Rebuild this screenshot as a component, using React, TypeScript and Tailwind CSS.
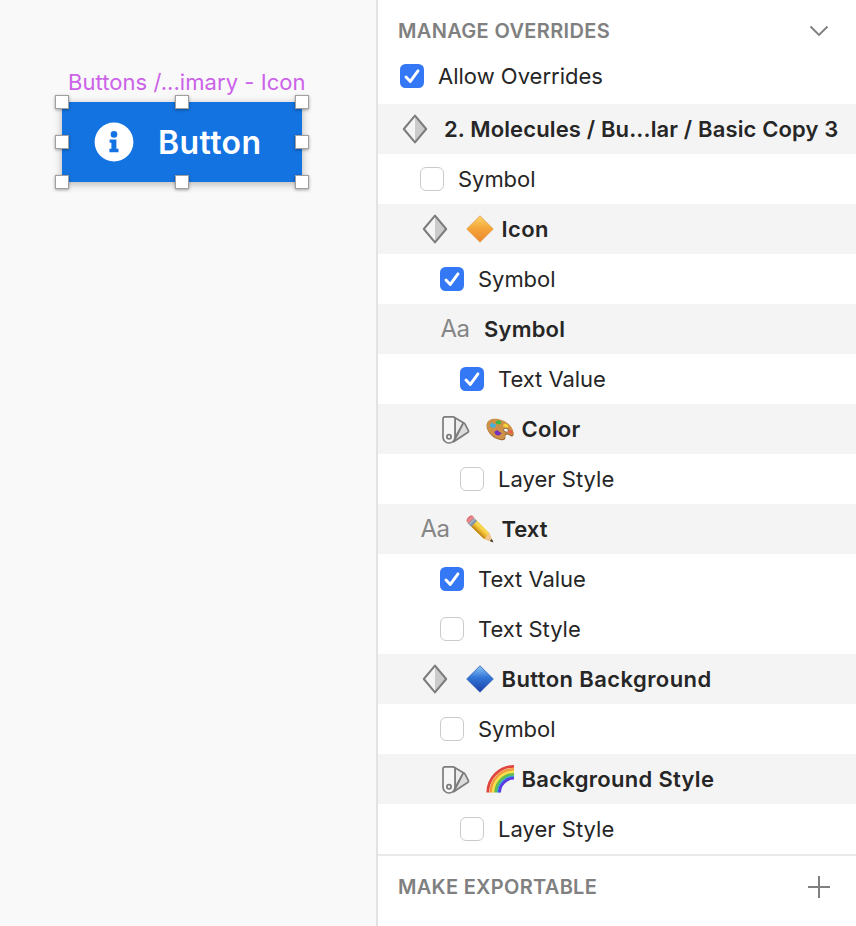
import type { ReactNode } from "react";

type IconKind = "symbol" | "text" | "style";
type EmojiKind = "orange" | "blue" | "palette" | "pencil" | "rainbow";

interface HeaderRow {
  kind: "header";
  indent: string;
  icon: IconKind;
  emoji?: EmojiKind;
  label: string;
  tracking: string;
}

interface CheckRow {
  kind: "check";
  indent: string;
  checked: boolean;
  label: string;
  tracking: string;
}

const rows: (HeaderRow | CheckRow)[] = [
  { kind: "header", indent: "pl-[22px]", icon: "symbol", label: "2. Molecules / Bu...lar / Basic Copy 3", tracking: "tracking-[0.14px]" },
  { kind: "check", indent: "pl-[42px]", checked: false, label: "Symbol", tracking: "tracking-[-0.05px]" },
  { kind: "header", indent: "pl-[42px]", icon: "symbol", emoji: "orange", label: "Icon", tracking: "tracking-[0.4px]" },
  { kind: "check", indent: "pl-[62px]", checked: true, label: "Symbol", tracking: "tracking-[-0.05px]" },
  { kind: "header", indent: "pl-[62px]", icon: "text", label: "Symbol", tracking: "tracking-[0.2px]" },
  { kind: "check", indent: "pl-[82px]", checked: true, label: "Text Value", tracking: "tracking-[-0.05px]" },
  { kind: "header", indent: "pl-[62px]", icon: "style", emoji: "palette", label: "Color", tracking: "tracking-[0.3px]" },
  { kind: "check", indent: "pl-[82px]", checked: false, label: "Layer Style", tracking: "tracking-[0.02px]" },
  { kind: "header", indent: "pl-[42px]", icon: "text", emoji: "pencil", label: "Text", tracking: "tracking-[0px]" },
  { kind: "check", indent: "pl-[62px]", checked: true, label: "Text Value", tracking: "tracking-[-0.05px]" },
  { kind: "check", indent: "pl-[62px]", checked: false, label: "Text Style", tracking: "tracking-[-0.03px]" },
  { kind: "header", indent: "pl-[42px]", icon: "symbol", emoji: "blue", label: "Button Background", tracking: "tracking-[0.41px]" },
  { kind: "check", indent: "pl-[62px]", checked: false, label: "Symbol", tracking: "tracking-[-0.05px]" },
  { kind: "header", indent: "pl-[62px]", icon: "style", emoji: "rainbow", label: "Background Style", tracking: "tracking-[0.3px]" },
  { kind: "check", indent: "pl-[82px]", checked: false, label: "Layer Style", tracking: "tracking-[0.02px]" },
];

function Checkbox({ checked }: { checked: boolean }) {
  if (!checked) {
    return <span className="size-6 shrink-0 rounded-[6px] border border-[#cbcbcb] bg-white" />;
  }
  return (
    <span className="size-6 shrink-0 rounded-[5.5px] bg-[#3478f6]">
      <svg viewBox="0 0 24 24" className="size-6" fill="none">
        <path d="M6 13 L10.3 17.4 L18 6.8" stroke="#fff" strokeWidth="2.9" strokeLinecap="round" strokeLinejoin="round" />
      </svg>
    </span>
  );
}

function SymbolIcon() {
  return (
    <svg viewBox="0 0 30 30" className="size-[30px]" fill="none">
      <path d="M15 1.8 L26.3 15 L15 28.2 Z" fill="#cbcbcb" />
      <path d="M15 1.6 L26.2 15 L15 28.4 L3.8 15 Z" stroke="#7c7c7c" strokeWidth="2" strokeLinejoin="round" />
    </svg>
  );
}

function TextIcon() {
  return (
    <span className="font-['Inter','Liberation_Sans',sans-serif] text-[24px] leading-[30px] font-normal tracking-[-0.6px] text-[#868686]">Aa</span>
  );
}

function StyleIcon() {
  return (
    <svg viewBox="0 0 30 30" className="size-[30px]" fill="none" stroke="#7c7c7c" strokeWidth="1.7" strokeLinejoin="round">
      <path d="M15 3.8 L23.4 8.8 L15 23.8 Z" fill="#ebebeb" />
      <path d="M23.4 8.8 Q24.6 9.3 25.2 10.4 L28.4 16.6 Q28.9 17.6 28 18.2 L13.7 27.8 Z" fill="#dcdcdc" />
      <path d="M3 4.8 Q3 2.8 5 2.8 H13 Q15 2.8 15 4.8 V23 A6 6 0 0 1 3 23 Z" fill="#f6f6f6" />
      <circle cx="9" cy="22.7" r="2.1" strokeWidth="1.8" />
    </svg>
  );
}

function DiamondEmoji({ id, stops, edge }: { id: string; stops: [string, string, string]; edge: string }) {
  return (
    <>
      <defs>
        <linearGradient id={id} x1="0" y1="0" x2="0" y2="1">
          <stop offset="0" stopColor={stops[0]} />
          <stop offset="0.45" stopColor={stops[1]} />
          <stop offset="1" stopColor={stops[2]} />
        </linearGradient>
      </defs>
      <path d="M14 0.8 L27.3 14 L14 27.2 L0.7 14 Z" fill={`url(#${id})`} stroke={edge} strokeWidth="0.8" strokeLinejoin="round" />
    </>
  );
}

function RainbowBands() {
  const bands: [string, number][] = [
    ["#e0443e", 26.2],
    ["#f39a3d", 23.2],
    ["#f8e04b", 20.6],
    ["#63bd4b", 18.3],
    ["#36a8d8", 15.8],
    ["#5b3be0", 14.4],
  ];
  return (
    <>
      {bands.map(([color, r]) => (
        <path key={color} d={`M${28 - r} 27.6 A${r} ${r} 0 0 1 28 ${27.6 - r}`} stroke={color} strokeWidth="2.8" fill="none" />
      ))}
    </>
  );
}

function Emoji({ kind }: { kind: EmojiKind }) {
  let art: ReactNode;
  if (kind === "orange") {
    art = <DiamondEmoji id="orange" stops={["#fbd568", "#f5a83b", "#ec8431"]} edge="#e3a050" />;
  } else if (kind === "blue") {
    art = <DiamondEmoji id="blue" stops={["#8cc8f5", "#3275d6", "#1a3fa6"]} edge="#2f62b5" />;
  } else if (kind === "palette") {
    art = (
      <g transform="translate(0 1.6)">
        <path d="M0.6 9 C1 3.5 6 1.8 12 2.8 C20 4.2 27 10 27.6 17 C27.7 20.5 25.6 20.3 23.6 18.8 C21 17 19 18.4 19.4 20.2 C19.8 22.2 18.5 24 15.5 23.6 C7.5 22.8 0.4 15.5 0.6 9 Z" fill="#9b672f" />
        <path d="M0.8 8.2 C1.4 3.2 6 1.6 12 2.4 C20 3.8 26.8 9.4 27.4 16 C27.3 19 25.5 18.8 23.6 17.5 C21 15.8 18.2 17.2 18.8 19.4 C19.2 21.5 18 22.8 15.5 22.6 C7.5 21.8 0.5 14.5 0.8 8.2 Z" fill="#cf9147" />
        <ellipse cx="20" cy="13.6" rx="2.5" ry="1.8" fill="#f5f5f5" stroke="#79502a" strokeWidth="0.7" transform="rotate(22 20 13.6)" />
        <path d="M4 8 L6 5.8 L8 7.4 L10 7.7 L9.4 11 L6.5 11.2 L4 10 Z" fill="#45aedc" />
        <path d="M9.8 4.8 L12.8 3.5 L15.4 5.2 L14.9 7.5 L12 7.8 L10 6.8 Z" fill="#43b849" />
        <path d="M17.2 8 L19.5 7 L22.2 8.7 L22.5 10.7 L19.5 11 L17.5 9.8 Z" fill="#f6d438" />
        <path d="M23 13.8 L25.8 13.6 L27 16.7 L24.6 17 L22.5 15.6 Z" fill="#ed5a4b" />
        <path d="M8.1 15.5 L11.1 13.5 L14.2 15.8 L16 16.4 L13.2 19 L10 18.3 Z" fill="#7130bd" />
      </g>
    );
  } else if (kind === "pencil") {
    art = (
      <>
        <path d="M9.2 4.1 L23.2 18.2 L27.3 27.3 L17.7 23.8 L3.4 9.8 Z" fill="#e8b52b" />
        <path d="M9.2 4.1 L23.2 18.2 L20.8 20.3 L6.5 6.6 Z" fill="#f8d34c" />
        <path d="M5.2 11.6 L18.2 24 L19.1 22.2 L6.7 10 Z" fill="#c48a20" />
        <path d="M23.3 18.3 L27.3 27.3 L17.9 23.9 L20 22.8 L20.9 20.5 Z" fill="#efc590" />
        <path d="M25.8 23.9 L27.5 27.5 L23.8 26.1 Z" fill="#363430" />
        <path d="M7.2 2.1 L11 5.9 L5.2 11.7 L1.5 7.9 Z" fill="#8297ac" />
        <path d="M8.8 4 L3.5 9.3" stroke="#c3d0db" strokeWidth="1" />
        <path d="M0.8 7 C-0.5 4.4 4 -0.6 6.7 0.7 L8.3 2.8 L2.4 8.6 Z" fill="#e98789" />
        <path d="M1 5.8 C1.2 3.2 3.7 0.9 6.1 1" stroke="#c55e67" strokeWidth="0.8" fill="none" />
      </>
    );
  } else {
    art = <RainbowBands />;
  }
  return (
    <svg viewBox="0 0 28 28" className="mr-[7.5px] size-7 shrink-0">
      {art}
    </svg>
  );
}

function Header({ row }: { row: HeaderRow }) {
  return (
    <div className={`flex h-[50px] items-center bg-[#f4f4f4] ${row.indent}`}>
      <span className="flex h-[30px] w-[30px] shrink-0 items-center justify-center">
        {row.icon === "symbol" ? <SymbolIcon /> : row.icon === "text" ? <TextIcon /> : <StyleIcon />}
      </span>
      <span className={`flex items-center ${row.emoji ? "pl-4" : "pl-[14px]"}`}>
        {row.emoji && <Emoji kind={row.emoji} />}
        <span className={`text-[22px] leading-[26px] font-semibold whitespace-nowrap ${row.tracking}`}>{row.label}</span>
      </span>
    </div>
  );
}

function Check({ row }: { row: CheckRow }) {
  return (
    <div className={`flex h-[50px] items-center gap-[14px] ${row.indent}`}>
      <Checkbox checked={row.checked} />
      <span className={`text-[22px] leading-[26px] whitespace-nowrap ${row.tracking}`}>{row.label}</span>
    </div>
  );
}

const handles = [
  "-left-[7px] -top-[7px]",
  "left-[113px] -top-[7px]",
  "left-[233px] -top-[7px]",
  "-left-[7px] top-[33px]",
  "left-[233px] top-[33px]",
  "-left-[7px] top-[73px]",
  "left-[113px] top-[73px]",
  "left-[233px] top-[73px]",
];

function Canvas() {
  return (
    <main className="w-[376px] shrink-0 bg-[#f9f9f9] pt-[69px] pl-[62px]">
      <div className="pl-[6px] text-[22px] leading-[26px] tracking-[0.06px] whitespace-nowrap text-[#cb62e8]">Buttons /...imary - Icon</div>
      <div className="relative mt-[7px] flex h-20 w-60 items-center bg-[#1373e1] pl-8 shadow-[0_2px_8px_rgba(0,0,0,0.28)]">
        <svg viewBox="0 0 40 40" className="size-10 shrink-0">
          <circle cx="20" cy="20" r="19.4" fill="#fff" />
          <circle cx="20" cy="12.4" r="3.3" fill="#1373e1" />
          <path d="M15.6 17.4 H22.4 V26.7 H24.5 V30.2 H15.4 V26.7 H17.4 V20.8 H15.6 Z" fill="#1373e1" />
        </svg>
        <span className="pt-[2px] pl-6 text-[32px] leading-10 font-semibold tracking-[0.4px] text-white">Button</span>
        {handles.map((place) => (
          <span key={place} className={`absolute size-[14px] border border-[#a0a0a0] bg-white shadow-[0_1px_3px_rgba(0,0,0,0.35)] ${place}`} />
        ))}
      </div>
    </main>
  );
}

export default function App() {
  return (
    <div className="flex h-[926px] w-[856px] overflow-hidden bg-white font-['Inter','Liberation_Sans',sans-serif] text-[#262626]">
      <Canvas />
      <aside className="flex min-w-0 flex-1 flex-col border-l-2 border-[#e3e3e3] bg-white">
        <div className="flex h-[52px] items-center justify-between pt-[10px] pr-[27px] pl-5">
          <h2 className="text-[20px] leading-6 font-semibold tracking-[0.34px] text-[#808080]">MANAGE OVERRIDES</h2>
          <svg viewBox="0 0 20 12" className="h-3 w-5" fill="none">
            <path d="M1.5 1.5 L10 10 L18.5 1.5" stroke="#808080" strokeWidth="1.9" />
          </svg>
        </div>
        <div className="flex h-[52px] items-center gap-[14px] pb-1 pl-[22px]">
          <Checkbox checked />
          <span className="text-[22px] leading-[26px] tracking-[0px]">Allow Overrides</span>
        </div>
        {rows.map((row, i) => (row.kind === "header" ? <Header key={i} row={row} /> : <Check key={i} row={row} />))}
        <div className="flex flex-1 items-start justify-between border-t-2 border-[#e9e9e9] pt-5 pr-[26px] pl-5">
          <h2 className="-mt-px text-[20px] leading-6 font-semibold tracking-[0.3px] text-[#808080]">MAKE EXPORTABLE</h2>
          <svg viewBox="0 0 22 22" className="size-[22px]">
            <path d="M11 0 V22 M0 11 H22" stroke="#808080" strokeWidth="2" />
          </svg>
        </div>
      </aside>
    </div>
  );
}
